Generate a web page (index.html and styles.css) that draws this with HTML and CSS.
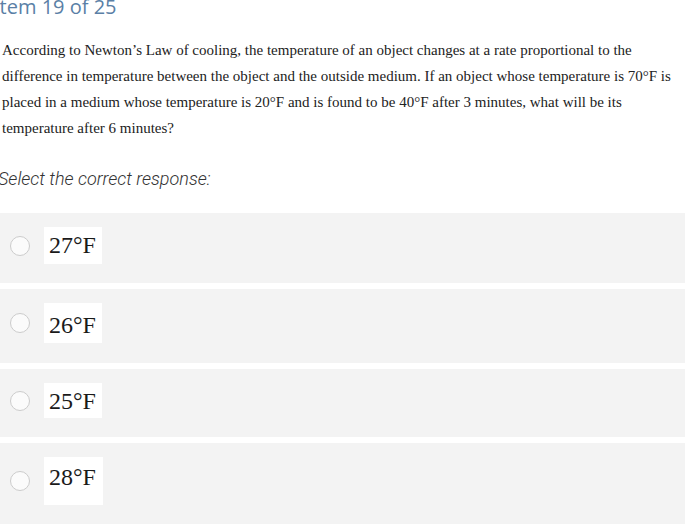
FILE: index.html
```html
<!DOCTYPE html>
<html>
<head>
<meta charset="utf-8">
<link rel="stylesheet" href="styles.css">
</head>
<body>
<div class="page">
  <div class="title">Item 19 of 25</div>
  <p class="question">According to Newton’s Law of cooling, the temperature of an object changes at a rate proportional to the difference in temperature between the object and the outside medium. If an object whose temperature is 70°F is placed in a medium whose temperature is 20°F and is found to be 40°F after 3 minutes, what will be its temperature after 6 minutes?</p>
  <div class="prompt">Select the correct response:</div>
  <div class="options">
    <div class="option o1"><span class="radio"></span><span class="label">27°F</span></div>
    <div class="option o2"><span class="radio"></span><span class="label">26°F</span></div>
    <div class="option o3"><span class="radio"></span><span class="label">25°F</span></div>
    <div class="option o4"><span class="radio"></span><span class="label">28°F</span></div>
  </div>
</div>
</body>
</html>
```

FILE: styles.css
```css
html, body {
  margin: 0;
  padding: 0;
  background: #ffffff;
}
body {
  width: 685px;
  height: 524px;
  overflow: hidden;
}
.page {
  display: flex;
  flex-direction: column;
}
.title {
  font-family: "Open Sans", sans-serif;
  font-size: 20px;
  line-height: 24px;
  color: #5a7fa6;
  margin-top: -5px;
  margin-left: -6px;
  white-space: nowrap;
}
.question {
  font-family: "Liberation Serif", serif;
  font-size: 15px;
  line-height: 26px;
  color: #222222;
  margin: 18px 0 0 2px;
  width: 680px;
}
.prompt {
  font-family: Roboto, sans-serif;
  font-weight: 300;
  font-style: italic;
  font-size: 18px;
  line-height: 24px;
  color: #333333;
  margin: 26px 0 0 -2px;
}
.options {
  display: flex;
  flex-direction: column;
  gap: 6px;
  margin-top: 22px;
}
.option {
  display: flex;
  align-items: center;
  background: #f3f3f3;
  padding: 14px 0 20px 10px;
}
.o1 { padding-bottom: 19px; }
.o3 { padding-bottom: 19px; }
.radio {
  width: 18px;
  height: 18px;
  border: 1px solid #cccccc;
  border-radius: 50%;
  background: #fbfbfb;
  flex: none;
  margin-right: 14px;
}
.label {
  background: #ffffff;
  font-family: "Liberation Serif", serif;
  font-size: 24px;
  line-height: 24px;
  color: #1a1a1a;
  padding: 6px 6px 7px 5px;
}
.o2 .label { padding-top: 10px; padding-bottom: 6px; }
.o3 .label { padding-top: 6px; padding-bottom: 5px; }
.o4 .label { padding-top: 8px; padding-bottom: 16px; padding-right: 7px; }
```
